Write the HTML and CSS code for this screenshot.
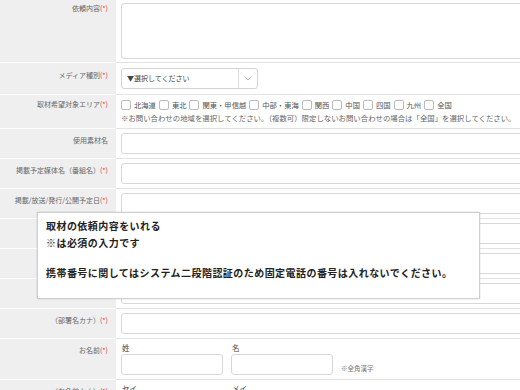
FILE: index.html
```html
<!DOCTYPE html>
<html lang="ja">
<head>
<meta charset="UTF-8">
<meta name="viewport" content="width=device-width, initial-scale=1.0">
<title>取材依頼フォーム</title>
<link rel="stylesheet" href="styles.css">
</head>
<body>

<div class="page">
  <table class="form">
    <!-- 依頼内容 -->
    <tr class="row-first">
      <th>依頼内容<span class="req">(*)</span></th>
      <td><textarea class="area"></textarea></td>
    </tr>
    <tr class="row-select">
      <th>メディア種別<span class="req">(*)</span></th>
      <td>
        <div class="select">
          <span class="select-text">▼選択してください</span>
          <span class="select-arrow">
            <svg width="8" height="5" viewBox="0 0 8 5"><path d="M0.5 0.5 L4 4 L7.5 0.5" fill="none" stroke="#aaa" stroke-width="0.9"/></svg>
          </span>
        </div>
      </td>
    </tr>
    <tr class="row-area">
      <th>取材希望対象エリア<span class="req">(*)</span></th>
      <td>
        <div class="checks">
          <label class="check"><input type="checkbox">北海道</label>
          <label class="check"><input type="checkbox">東北</label>
          <label class="check"><input type="checkbox">関東・甲信越</label>
          <label class="check"><input type="checkbox">中部・東海</label>
          <label class="check"><input type="checkbox">関西</label>
          <label class="check"><input type="checkbox">中国</label>
          <label class="check"><input type="checkbox">四国</label>
          <label class="check"><input type="checkbox">九州</label>
          <label class="check"><input type="checkbox">全国</label>
        </div>
        <p class="note">※お問い合わせの地域を選択してください。（複数可）限定しないお問い合わせの場合は「全国」を選択してください。</p>
      </td>
    </tr>
    <tr>
      <th>使用素材名</th>
      <td><input class="text" type="text"></td>
    </tr>
    <tr>
      <th>掲載予定媒体名（番組名）<span class="req">(*)</span></th>
      <td><input class="text" type="text"></td>
    </tr>
    <tr>
      <th>掲載/放送/発行/公開予定日<span class="req">(*)</span></th>
      <td><input class="text" type="text"></td>
    </tr>
    <tr>
      <th>会社名<span class="req">(*)</span></th>
      <td><input class="text" type="text"></td>
    </tr>
    <tr>
      <th>（会社名カナ）<span class="req">(*)</span></th>
      <td><input class="text" type="text"></td>
    </tr>
    <tr>
      <th>部署名<span class="req">(*)</span></th>
      <td><input class="text" type="text"></td>
    </tr>
    <tr>
      <th>（部署名カナ）<span class="req">(*)</span></th>
      <td><input class="text" type="text"></td>
    </tr>
    <tr class="row-name">
      <th>お名前<span class="req">(*)</span></th>
      <td>
        <div class="names">
          <div class="name-field"><span class="name-label">姓</span><input class="text short" type="text"></div>
          <div class="name-field"><span class="name-label">名</span><input class="text short" type="text"></div>
          <span class="hint">※全角漢字</span>
        </div>
      </td>
    </tr>
    <tr class="row-name">
      <th>（お名前カナ）<span class="req">(*)</span></th>
      <td>
        <div class="names">
          <div class="name-field"><span class="name-label">セイ</span><input class="text short" type="text"></div>
          <div class="name-field"><span class="name-label">メイ</span><input class="text short" type="text"></div>
          <span class="hint">※全角カナ</span>
        </div>
      </td>
    </tr>
  </table>

  <!-- 注意書きのポップアップ -->
  <div class="notice">
    <p>取材の依頼内容をいれる<br>※は必須の入力です</p>
    <p class="notice-last">携帯番号に関してはシステム二段階認証のため固定電話の番号は入れないでください。</p>
  </div>
</div>

</body>
</html>
```

FILE: styles.css
```css
html, body {
  margin: 0;
  overflow: hidden;
}

body {
  font-family: "Noto Sans CJK JP", "Noto Sans", sans-serif;
  color: #555;
  background: #fff;
}

.page {
  position: relative;
  width: 520px;
}

.form {
  width: 520px;
  border-collapse: collapse;
  table-layout: fixed;
}

.form th {
  width: 108px;
  padding: 6px 8px 0 0;
  background-color: #efefef;
  border-bottom: 1px solid #fff;
  text-align: right;
  vertical-align: top;
  font-size: 7px;
  line-height: 10px;
  font-weight: normal;
  color: #666;
  white-space: nowrap;
}

.form td {
  padding: 4px 0 4px 5px;
  border-bottom: 1px solid #e2e2e2;
  vertical-align: top;
  overflow: visible;
}

.req {
  color: #e33;
}

/* first row: textarea */
.row-first th { padding-top: 3px; }
.row-first td { padding: 3px 0 3px 5px; }

.area {
  display: block;
  width: 430px;
  height: 56px;
  box-sizing: border-box;
  border: 1px solid #d8d8d8;
  border-radius: 3px;
  resize: none;
  margin: 0;
}

/* select */
.row-select th { padding-top: 7px; }
.row-select td { padding: 5px 0 5px 5px; }

.select {
  display: flex;
  width: 137px;
  height: 21px;
  box-sizing: border-box;
  border: 1px solid #d4d4d4;
  border-radius: 3px;
  background: #fff;
}

.select-text {
  flex: 1;
  padding-left: 5px;
  font-size: 7px;
  line-height: 19px;
  color: #444;
}

.select-arrow {
  width: 18px;
  border-left: 1px solid #ddd;
  display: flex;
  align-items: center;
  justify-content: center;
}

/* area checkboxes */
.row-area th { padding-top: 4px; }

.checks {
  display: flex;
  height: 12px;
  align-items: center;
  white-space: nowrap;
}

.check {
  display: flex;
  align-items: center;
  font-size: 7.3px;
  color: #555;
  margin-right: 3px;
}

.check input {
  appearance: none;
  width: 10px;
  height: 10px;
  margin: 0 3px 0 0;
  border: 1px solid #bbb;
  border-radius: 2px;
  background: #fff;
}

.note {
  margin: 1px 0 0 0;
  font-size: 7.4px;
  line-height: 12px;
  color: #666;
  white-space: nowrap;
}

/* text inputs */
.text {
  display: block;
  width: 430px;
  height: 21px;
  box-sizing: border-box;
  margin: 0;
  border: 1px solid #d8d8d8;
  border-radius: 3px;
  background: #fff;
}

.text.short {
  width: 102px;
}

/* name rows */
.row-name td { padding-top: 3px; }

.names {
  display: flex;
  align-items: flex-end;
  gap: 8px;
}

.name-label {
  display: block;
  height: 12px;
  padding-left: 1px;
  font-size: 7.5px;
  line-height: 12px;
  color: #444;
}

.hint {
  font-size: 6.5px;
  color: #777;
  padding-bottom: 2px;
}

/* notice popup */
.notice {
  position: absolute;
  left: 37px;
  top: 212px;
  width: 443px;
  height: 87px;
  box-sizing: border-box;
  padding: 4px 8px;
  background: #fff;
  border: 1px solid #cfcfcf;
  box-shadow: 0 0 2px rgba(0, 0, 0, 0.15);
  color: #222;
  font-size: 10px;
  font-weight: bold;
  letter-spacing: 0.45px;
  line-height: 17px;
}

.notice p {
  margin: 0;
}

.notice-last {
  margin-top: 13px !important;
}
```
